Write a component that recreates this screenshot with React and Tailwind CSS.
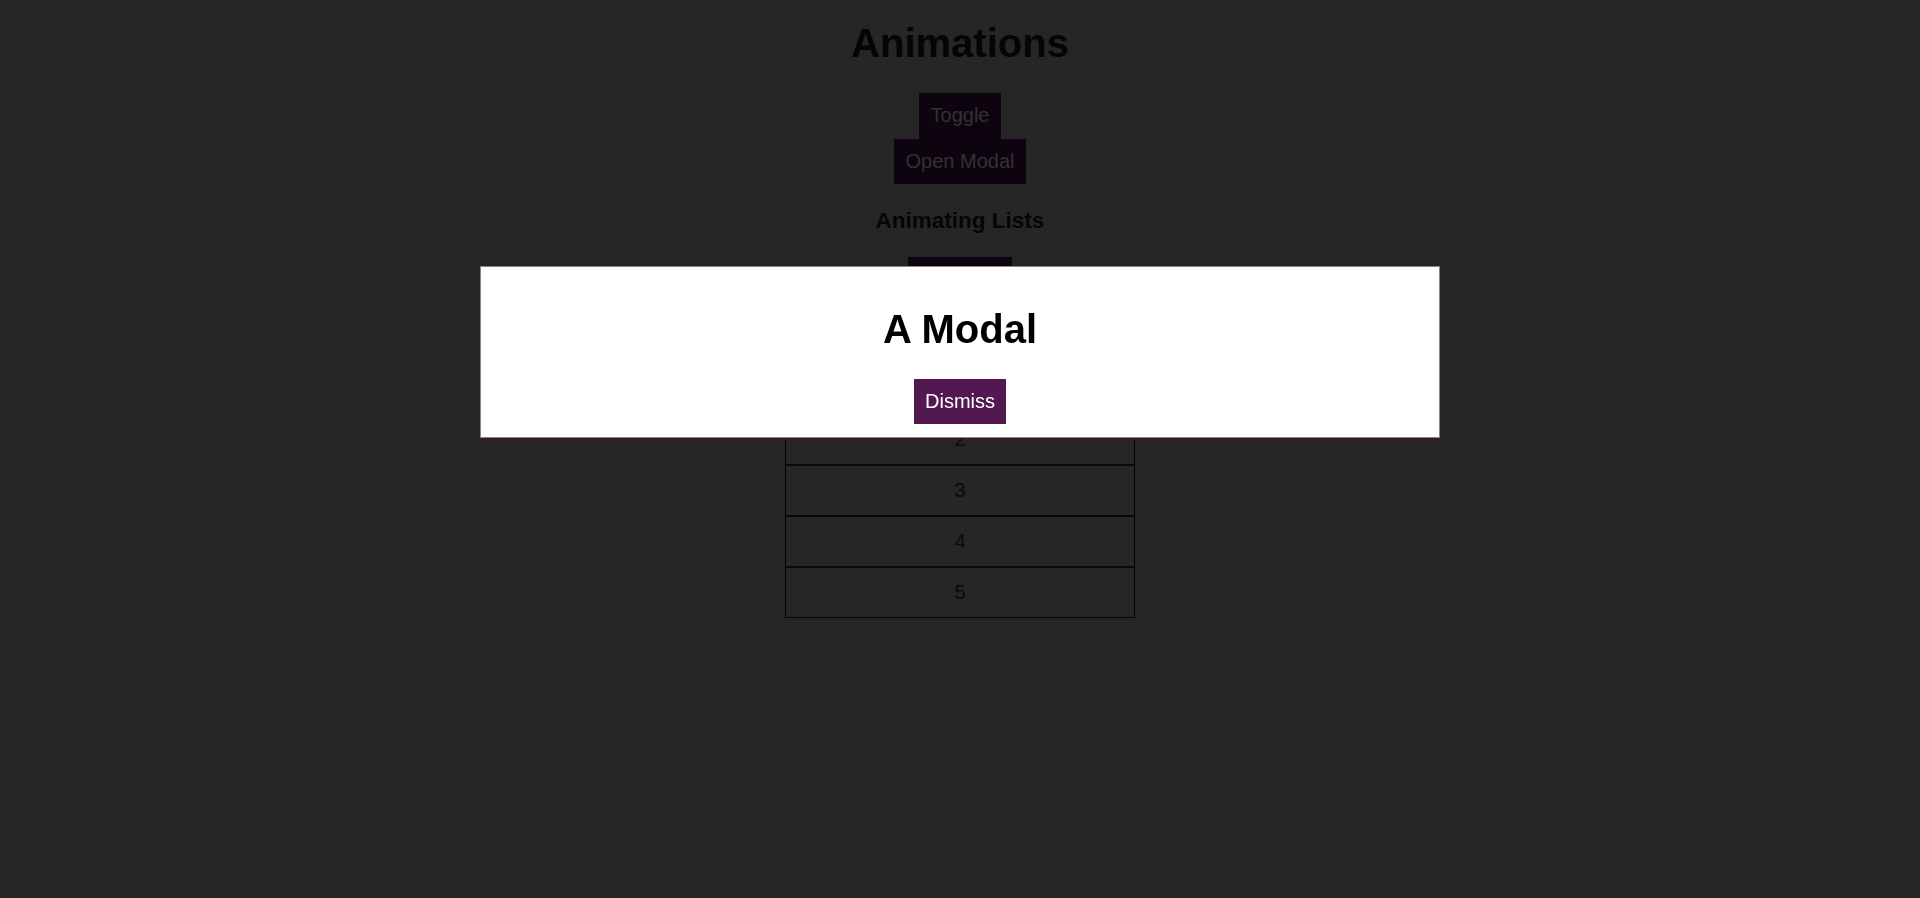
const items = [1, 2, 3, 4, 5];

function DimButton({ children }) {
  return (
    <button className="mx-auto block bg-[#0e0410] px-[12px] py-[11px] text-[20px] leading-[23.5px] text-[#323232]">
      {children}
    </button>
  );
}

export default function App() {
  return (
    <div className="min-h-[898px] bg-[#262626] text-center font-['Liberation_Sans',Arial,sans-serif]">
      <div className="flex flex-col items-center pt-[20px]">
        <h1 className="text-[40px] font-bold leading-[46px] text-[#050505]">Animations</h1>

        <div className="mt-[27px]">
          <DimButton>Toggle</DimButton>
          <DimButton>Open Modal</DimButton>
        </div>

        <h3 className="mt-[23.5px] text-[22.5px] font-bold leading-[26px] text-[#050505]">Animating Lists</h3>

        <div className="mt-[23.5px]">
          <DimButton>Add Item</DimButton>
        </div>

        <ul className="mt-[60px] w-[350px]">
          {items.map((item) => (
            <li
              key={item}
              className="border border-black border-y-[#0e0508] py-[12.5px] text-[20px] leading-[24px] text-[#0a0a0a]"
            >
              {item}
            </li>
          ))}
        </ul>
      </div>

      <div className="fixed left-1/2 top-[266px] w-[960px] -translate-x-1/2 border border-[#8c8585] bg-white px-[12px] py-[12.5px] shadow-[0_2px_3px_rgba(70,25,25,0.7)]">
        <h1 className="mt-[26.5px] text-[40px] font-bold leading-[46px] text-black">A Modal</h1>
        <button className="mx-auto mt-[26.5px] block bg-[#531851] px-[11px] py-[11px] text-[20px] leading-[23.5px] text-white">
          Dismiss
        </button>
      </div>
    </div>
  );
}
